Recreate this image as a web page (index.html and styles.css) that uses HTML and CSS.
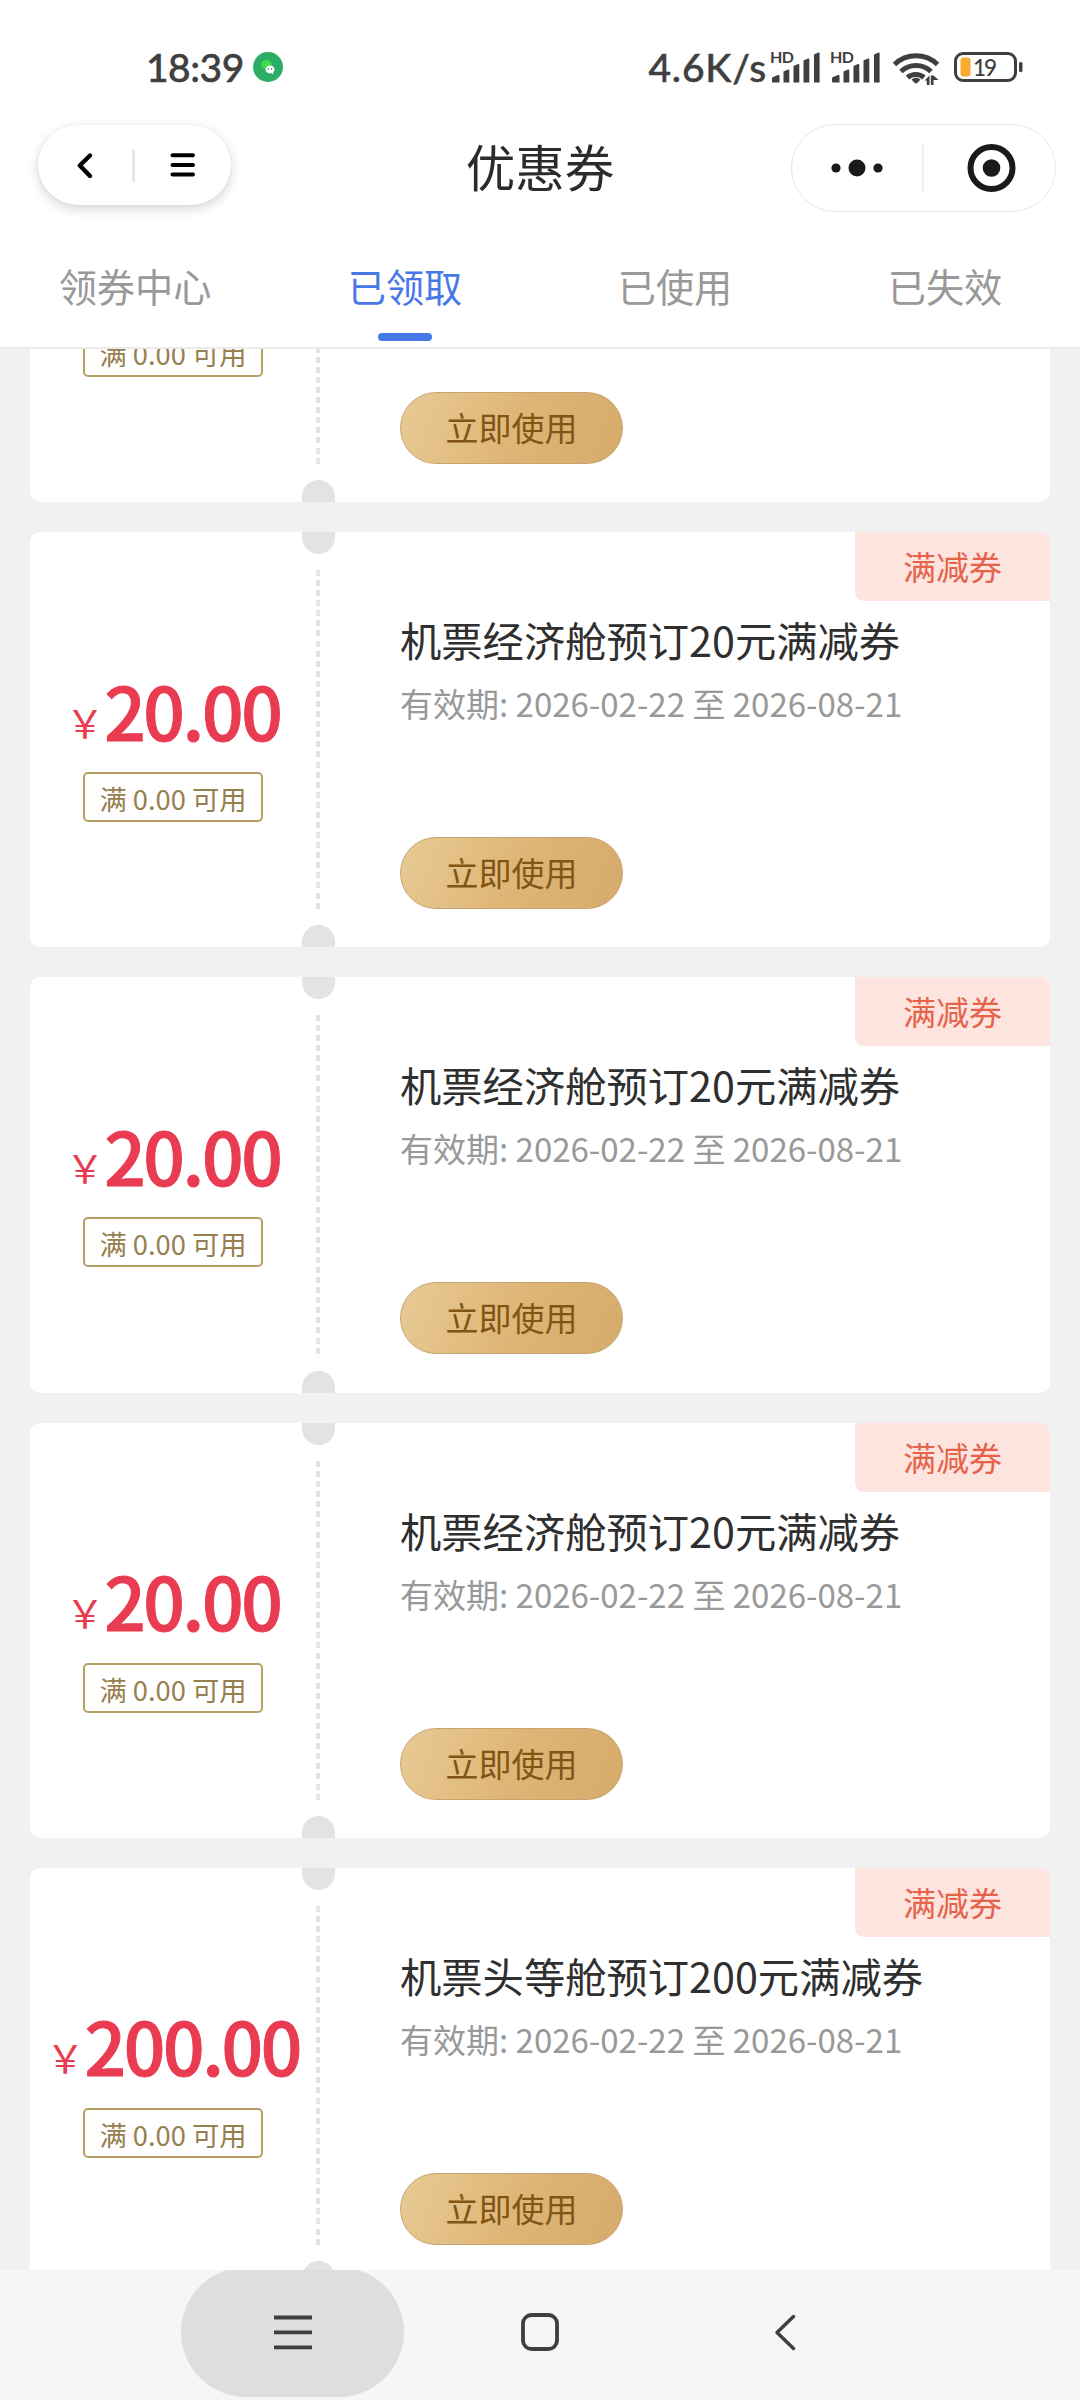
FILE: index.html
```html
<!DOCTYPE html>
<html lang="zh-CN">
<head>
<meta charset="utf-8">
<title>优惠券</title>
<link rel="stylesheet" href="styles.css">
</head>
<body>
<div class="screen">
  <header class="top">
    <div class="status">
      <span class="time">18:39</span>
      <svg class="chat" width="30" height="30" viewBox="0 0 30 30"><circle cx="15" cy="15" r="15" fill="#2bad65"/><ellipse cx="13.5" cy="12.5" rx="5.2" ry="4.7" fill="#3fdc4e"/><path d="M17 13.5c2.600 0 4.500 1.700 4.500 4 0 1.200-.6 2.200-1.300 2.900l.2 1.800-1.800-.9c-3.600.6-6.100-1.300-6.100-3.800 0-2.300 2-4 4.500-4z" fill="#fff"/><circle cx="15.400" cy="17" r=".7" fill="#444"/><circle cx="18.600" cy="17" r=".7" fill="#444"/></svg>
      <span class="speed">4.6K/s</span>
      <svg class="signals" width="254" height="36" viewBox="770 49 254 36" fill="#3f3f3f">
        <g id="sig">
          <text class="hd" x="770" y="63" textLength="24">HD</text>
          <path d="M773 82.500q-1 0-1-1v-3q0-1 1-1.500l5-2q1.500-.4 1.500 1v6.500zM783.500 82.500v-11l4.500-2q1.300-.4 1.300 1v12zM793.500 82.500v-16.500l4.500-2q1.300-.4 1.300 1v17.500zM803.500 82.500v-22l4.500-2q1.300-.4 1.300 1v23zM814 82.500v-28l4.300-2q1.300-.4 1.300 1v29z"/>
        </g>
        <use href="#sig" x="60"/>
        <g fill="none" stroke="#3f3f3f" stroke-width="5">
          <path d="M894.500 64.500a31 31 0 0 1 43 0M901 71.500a21.500 21.500 0 0 1 30 0M907.500 77.500a12.500 12.500 0 0 1 16.500 0"/>
        </g>
        <path d="M911.500 79.500a7 7 0 0 1 9 0l-3 3.300q-1.500 1.200-3 0z"/>
        <path d="M924.500 80.500l5-5v9.500h-2.700v-4.500zM938.500 80l-5 0v5h-2.700v-9.500h2.700z"/>
        <rect x="955.500" y="53.500" width="60" height="27" rx="7.500" fill="none" stroke="#3f3f3f" stroke-width="3"/>
        <rect x="1019" y="62" width="3.500" height="10" rx="1.500"/>
        <rect x="960.500" y="57.500" width="10" height="19" rx="3" fill="#f7ab2f"/>
        <text class="level" x="973" y="75.500" textLength="24">19</text>
      </svg>
    </div>
    <div class="titlebar">
      <div class="back-pill">
        <svg width="193" height="80" viewBox="0 0 193 80" fill="none" stroke="#000" stroke-linecap="round" stroke-linejoin="round"><path d="M52 30.500L41.800 40.500 52 51" stroke-width="4.400"/><path d="M95.500 24v33" stroke="#e5e5e5" stroke-width="2.600" stroke-linecap="butt"/><path d="M134.500 30.300h20.500M134.500 40h20.500M134.500 49.500h20.500" stroke-width="4"/></svg>
      </div>
      <h1 class="page-title">优惠券</h1>
      <div class="capsule">
        <svg width="262" height="85" viewBox="792.500 125.500 262 85" fill="#1a1a1a"><circle cx="836.500" cy="168.500" r="4.600"/><circle cx="857.500" cy="168.500" r="8.500"/><circle cx="878.500" cy="168.500" r="4.600"/><path d="M923.500 143v50" stroke="#e6e6e6" stroke-width="1.200"/><circle cx="992" cy="168.500" r="21" fill="none" stroke="#1a1a1a" stroke-width="6"/><circle cx="992" cy="168.500" r="8.800"/></svg>
      </div>
    </div>
    <nav class="tabs">
      <span class="tab">领券中心</span>
      <span class="tab active">已领取</span>
      <span class="tab">已使用</span>
      <span class="tab">已失效</span>
    </nav>
  </header>
  <main class="viewport">
    <div class="list">
      <section class="card scrolled">
        <div class="amount"><div class="limit">满 0.00 可用</div></div>
        <div class="tear"></div>
        <div class="info"><div class="use">立即使用</div></div>
      </section>
      <section class="card">
        <div class="amount"><div class="price"><span class="yen">￥</span>20.00</div><div class="limit">满 0.00 可用</div></div>
        <div class="tear"></div>
        <div class="info"><div class="badge">满减券</div><div class="name">机票经济舱预订20元满减券</div><div class="date">有效期: 2026-02-22 至 2026-08-21</div><div class="use">立即使用</div></div>
      </section>
      <section class="card">
        <div class="amount"><div class="price"><span class="yen">￥</span>20.00</div><div class="limit">满 0.00 可用</div></div>
        <div class="tear"></div>
        <div class="info"><div class="badge">满减券</div><div class="name">机票经济舱预订20元满减券</div><div class="date">有效期: 2026-02-22 至 2026-08-21</div><div class="use">立即使用</div></div>
      </section>
      <section class="card">
        <div class="amount"><div class="price"><span class="yen">￥</span>20.00</div><div class="limit">满 0.00 可用</div></div>
        <div class="tear"></div>
        <div class="info"><div class="badge">满减券</div><div class="name">机票经济舱预订20元满减券</div><div class="date">有效期: 2026-02-22 至 2026-08-21</div><div class="use">立即使用</div></div>
      </section>
      <section class="card">
        <div class="amount"><div class="price"><span class="yen">￥</span>200.00</div><div class="limit">满 0.00 可用</div></div>
        <div class="tear"></div>
        <div class="info"><div class="badge">满减券</div><div class="name">机票头等舱预订200元满减券</div><div class="date">有效期: 2026-02-22 至 2026-08-21</div><div class="use">立即使用</div></div>
      </section>
    </div>
  </main>
  <footer class="sysnav">
    <div class="key pressed"><svg width="40" height="40" viewBox="0 0 40 40"><path d="M1 5.500h38M1 20.300h38M1 35.300h38" stroke="#3f3f3f" stroke-width="3.800"/></svg></div>
    <div class="key"><svg width="40" height="40" viewBox="0 0 40 40"><rect x="3" y="3" width="34" height="34" rx="8.500" fill="none" stroke="#3f3f3f" stroke-width="3.800"/></svg></div>
    <div class="key"><svg width="40" height="40" viewBox="0 0 40 40"><path d="M27.500 4.500L11 20.500l16.500 16" fill="none" stroke="#3f3f3f" stroke-width="3.500" stroke-linecap="round" stroke-linejoin="round"/></svg></div>
  </footer>
</div>
</body>
</html>
```
FILE: styles.css
```css
* { box-sizing: border-box; }
body {
  margin: 0;
  background: #f1f1f1;
  font-family: "Noto Sans CJK SC", sans-serif;
  color: #333;
}
svg { display: block; }
.screen {
  width: 1080px;
  height: 2400px;
  display: flex;
  flex-direction: column;
  overflow: hidden;
}
.top {
  flex: none;
  height: 349px;
  background: #fff;
  border-bottom: 2px solid #ebebeb;
}
.status {
  height: 124px;
  padding: 10px 56px 0 146px;
  display: flex;
  align-items: center;
  color: #3f3f3f;
  font-family: Lato, sans-serif;
  font-weight: 500;
  font-size: 39px;
}
.time,
.speed { -webkit-text-stroke: 0.500px #3f3f3f; }
.time { width: 107px; letter-spacing: -0.5px; }
.speed { margin-left: auto; letter-spacing: 0.8px; }
.signals { margin-left: 3px; }
.hd { font: 700 16px Lato, sans-serif; }
.level { font: 500 22.500px Lato, sans-serif; }
.titlebar {
  height: 88px;
  padding: 0 24px 0 38px;
  display: grid;
  grid-template-columns: 265px 1fr 265px;
}
.back-pill {
  width: 193px;
  height: 80px;
  margin-top: 1px;
  border-radius: 40px;
  background: #fff;
  box-shadow: 0 4px 12px rgba(0, 0, 0, 0.16), 0 0 3px rgba(0, 0, 0, 0.06);
}
.page-title {
  margin: 0 14px 0 0;
  text-align: center;
  font-weight: 400;
  font-size: 49.500px;
  line-height: 83px;
  color: #2b2b2b;
}
.capsule {
  height: 88px;
  border: 1.500px solid #e6e6e6;
  border-radius: 44px;
}
.tabs {
  height: 135px;
  display: grid;
  grid-template-columns: repeat(4, 1fr);
}
.tab {
  display: flex;
  flex-direction: column;
  align-items: center;
  padding-top: 46px;
  font-size: 38.200px;
  line-height: 56px;
  color: #999;
}
.tab.active { color: #4878e8; }
.tab.active::after {
  content: "";
  width: 54px;
  height: 8px;
  margin-top: 19px;
  border-radius: 4px;
  background: #4878e8;
}
.viewport {
  flex: 1;
  min-height: 0;
  overflow: hidden;
}
.list {
  margin-top: -262.100px;
  padding: 0 30px;
  display: flex;
  flex-direction: column;
  gap: 30px;
}
.card {
  flex: none;
  height: 415.250px;
  display: grid;
  grid-template-columns: 272px 33px 1fr;
  background: #fff;
  border-radius: 10px;
  overflow: hidden;
}
.amount {
  width: 286px;
  padding-top: 121.500px;
  display: flex;
  flex-direction: column;
  align-items: center;
}
.price {
  height: 118.500px;
  line-height: 110px;
  white-space: nowrap;
  font-size: 73px;
  font-weight: 500;
  letter-spacing: -2.400px;
  -webkit-text-stroke: 1px #e93b51;
  color: #e93b51;
}
.yen {
  font-size: 38.500px;
  font-weight: 400;
  letter-spacing: 0;
  vertical-align: 3px;
  -webkit-text-stroke: 0;
}
.limit {
  height: 50px;
  padding: 0 14px;
  border: 2px solid #b59f62;
  border-radius: 5px;
  font-size: 27.300px;
  line-height: 48px;
  white-space: nowrap;
  color: #97804f;
}
.tear {
  display: flex;
  flex-direction: column;
  align-items: center;
  justify-content: space-between;
  background: repeating-linear-gradient(#e3e3e3 0 6px, transparent 6px 10.080px) 14px 38px / 4px 339px no-repeat;
}
.tear::before,
.tear::after {
  content: "";
  width: 33px;
  height: 22px;
  background: #e3e3e3;
}
.tear::before { border-radius: 0 0 16.500px 16.500px; }
.tear::after { border-radius: 16.500px 16.500px 0 0; }
.info {
  padding-left: 65px;
  display: flex;
  flex-direction: column;
  align-items: flex-start;
  white-space: nowrap;
}
.badge {
  align-self: flex-end;
  width: 195px;
  height: 69px;
  border-radius: 0 0 0 9px;
  background: #fee4df;
  color: #e4634a;
  font-size: 33px;
  line-height: 68px;
  text-align: center;
}
.name {
  margin-top: 8px;
  font-size: 41.300px;
  line-height: 60px;
  color: #2f2f2f;
}
.date {
  margin-top: 10px;
  font-size: 33px;
  line-height: 48px;
  color: #999;
}
.use {
  width: 223px;
  height: 72px;
  margin-top: 110px;
  border: 1px solid #c6a56f;
  border-radius: 36px;
  background: linear-gradient(110deg, #e8ca95, #dfb677 50%, #d6aa6b);
  color: #815514;
  font-size: 33px;
  line-height: 69px;
  text-align: center;
}
.scrolled .amount { padding-top: 240px; }
.scrolled .use { margin-top: 305px; }
.sysnav {
  flex: none;
  height: 130px;
  padding: 0 171px;
  display: grid;
  grid-template-columns: repeat(3, 246px);
  background: #f6f6f6;
  overflow: hidden;
}
.key {
  height: 130px;
  margin-top: -3px;
  display: flex;
  align-items: center;
  justify-content: center;
}
.pressed {
  width: 223px;
  margin-left: 10px;
  border-radius: 65px;
  background: #dedede;
}
```
